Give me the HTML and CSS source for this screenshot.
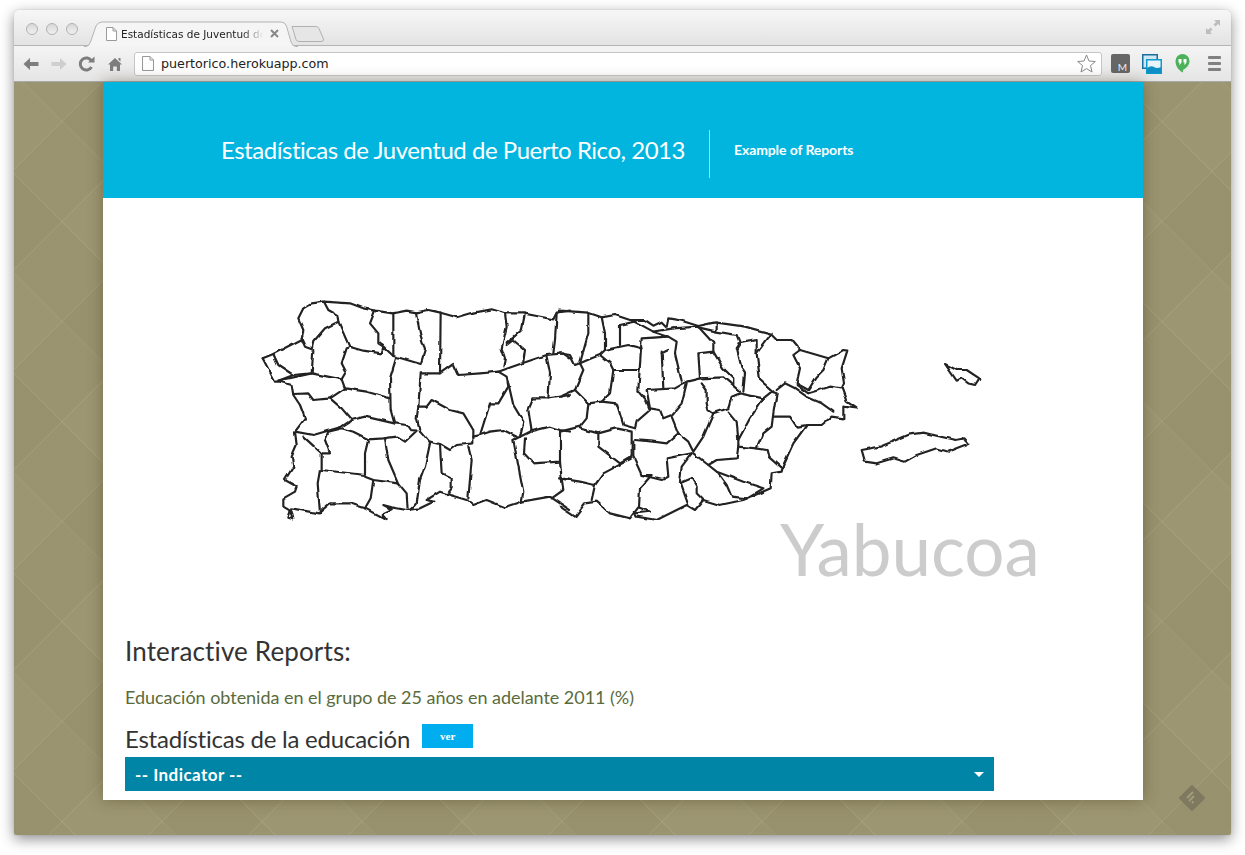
FILE: index.html
```html
<!DOCTYPE html>
<html>
<head>
  <meta charset="utf-8">
  <title>Estadísticas de Juventud de Puerto Rico</title>
  <link rel="stylesheet" href="styles.css">
</head>
<body>
<div class="window">
  <!-- pestañas -->
  <div class="tabstrip">
    <div class="lights"><span></span><span></span><span></span></div>
    <div class="tab">
      <svg class="tab-shape" width="214" height="26" viewBox="0 0 214 26"><path d="M0 25.500 H2 Q5 25.500 6.500 21 L12 5 Q14 1 18 1 H197 Q201 1 202.500 5 L207 21 Q208.500 25.500 212 25.500 H214" fill="#f5f5f5" stroke="#b4b4b4"/></svg>
      <svg class="page-icon" width="11" height="14" viewBox="0 0 11 14"><path d="M.5 .5 H7 L10.500 4 V13.500 H.5 Z M7 .5 V4 H10.500" fill="#fff" stroke="#9a9a9a"/></svg>
      <span class="tab-title">Estadísticas de Juventud de Puerto Rico</span>
      <svg class="tab-x" width="9" height="9" viewBox="0 0 9 9"><path d="M1 1 L8 8 M8 1 L1 8" stroke="#888" stroke-width="2"/></svg>
    </div>
    <svg class="newtab" width="34" height="18" viewBox="0 0 34 18"><path d="M1 1.500 H25 Q27 1.500 28 3.500 L32.500 14 Q33 16.500 30 16.500 H8 Q6 16.500 5 14.500 Z" fill="#e6e6e6" stroke="#b0b0b0"/></svg>
    <svg class="fullscreen" width="16" height="16" viewBox="0 0 16 16"><path d="M9 1 H15 V7 L13 5 L10.500 7.500 L8.500 5.500 L11 3 Z M7 15 H1 V9 L3 11 L5.500 8.500 L7.500 10.500 L5 13 Z" fill="#bdbdbd"/></svg>
  </div>

  <!-- barra de direcciones -->
  <div class="toolbar">
    <svg class="nav" width="18" height="16" viewBox="0 0 18 16"><path d="M1.500 8 L8 2 V6 H16.500 V10 H8 V14 Z" fill="#7d7d7d"/></svg>
    <svg class="nav" width="18" height="16" viewBox="0 0 18 16"><path d="M16.500 8 L10 2 V6 H1.500 V10 H10 V14 Z" fill="#cfcfcf"/></svg>
    <svg class="nav" width="18" height="16" viewBox="0 0 18 16"><path d="M13.500 11 A6 6 0 1 1 13.500 5" fill="none" stroke="#7d7d7d" stroke-width="3"/><path d="M10 6.500 H16.500 V0.500 Z" fill="#7d7d7d"/></svg>
    <svg class="nav" width="18" height="16" viewBox="0 0 18 16"><path d="M9 2 L16 8.500 H14 V15 H10.800 V10.500 H7.200 V15 H4 V8.500 H2 Z M12.500 2 H14.500 V5.500 L12.500 3.700 Z" fill="#7d7d7d"/></svg>
    <div class="omnibox">
      <svg width="12" height="15" viewBox="0 0 12 15"><path d="M.5 .5 H8 L11.500 4 V14.500 H.5 Z M8 .5 V4 H11.500" fill="#fff" stroke="#999"/></svg>
      <span class="url">puertorico.herokuapp.com</span>
      <svg class="star" width="19" height="19" viewBox="0 0 19 19"><path d="M9.500 1 L12 7 L18.300 7.500 L13.500 11.600 L15 18 L9.500 14.600 L4 18 L5.500 11.600 L.7 7.500 L7 7 Z" fill="#fff" stroke="#888"/></svg>
    </div>
    <div class="ext ext-m"><span>M</span></div>
    <svg class="ext-pic" width="20" height="20" viewBox="0 0 20 20"><rect x=".75" y=".75" width="14.500" height="13.500" fill="#cfe6f3" stroke="#1b6f9c" stroke-width="1.500"/><rect x="4.750" y="5.750" width="14.500" height="13.500" fill="#e8f4fa" stroke="#0f9bd0" stroke-width="1.500"/><path d="M5 19 V14 Q9 11 12 13 T19 13 V19 Z" fill="#0f8fc4"/></svg>
    <svg class="ext-hangouts" width="15" height="19" viewBox="0 0 15 19"><path d="M7.500 0 A7 7 0 0 1 14.500 7 C14.500 11 11 14.500 8 16 V18.500 C3.500 16.500 .5 12 .5 7 A7 7 0 0 1 7.500 0 Z" fill="#4cb15a"/><path d="M3.500 5 H6.500 V8.500 L5 10.500 H4 L4.800 8.500 H3.500 Z M8.500 5 H11.500 V8.500 L10 10.500 H9 L9.800 8.500 H8.500 Z" fill="#fff"/></svg>
    <div class="menu"><span></span><span></span><span></span></div>
  </div>

  <!-- contenido de la pagina -->
  <div class="viewport">
    <div class="sheet">
      <header class="banner">
        <h1 class="brand">Estadísticas de Juventud de Puerto Rico, 2013</h1>
        <span class="banner-divider"></span>
        <a class="banner-link">Example of Reports</a>
      </header>

      <div class="map-wrap">
        <svg class="map" width="740" height="240" viewBox="0 0 2220 720">
          <defs>
            <filter id="rough" x="-2%" y="-2%" width="104%" height="104%" color-interpolation-filters="sRGB">
              <feTurbulence type="fractalNoise" baseFrequency="0.035" numOctaves="1" seed="4"/>
              <feDisplacementMap in="SourceGraphic" scale="11" xChannelSelector="R" yChannelSelector="G"/>
              <feGaussianBlur stdDeviation="1.300"/>
            </filter>
          </defs>
          <g class="lines" filter="url(#rough)">
            <!-- mitad oeste -->
            <g>
              <path d="M38 205 L70 192 L155 148 L160 120 L145 85 L160 55 L185 40 L222 35 L300 40 L340 55 L375 62 L428 70 L470 62 L500 67 L535 60 L572 68 L620 82 L660 70 L725 58 L765 70 L820 70 L860 78 L910 88 L920 68 L960 62"/>
              <path d="M38 205 L75 275 L90 275 L125 285 L130 315 L150 345 L165 385 L135 425 L140 465 L125 500 L130 530 L105 570 L140 590 L135 605 L100 625 L100 650 L125 665 L130 688 L115 683 L125 655 L205 670 L240 640 L300 640 L345 655 L410 690 L395 672 L425 658 L400 645 L425 652 L470 660 L510 655 L550 635 L530 630 L570 605 L600 615 L650 630 L670 645 L710 630 L765 652 L815 635 L900 620 L960 660"/>
              <path d="M222 35 L235 60 L262 75 L265 95 L298 170 L290 175 L275 220 L288 245 L275 268"/>
              <path d="M265 95 L225 115 L190 155 L185 178 L165 170 L155 148"/>
              <path d="M190 180 L185 250 L130 255 L85 272"/>
              <path d="M70 192 L85 225 L130 255"/>
              <path d="M85 272 L130 262 L185 250 L275 268 L285 295 L240 325 L190 330 L175 310 L130 312"/>
              <path d="M285 295 L350 305 L420 325"/>
              <path d="M298 170 L340 182 L395 190 L400 170 L430 198"/>
              <path d="M375 62 L360 100 L385 130 L385 160 L400 170"/>
              <path d="M430 70 L430 198 L512 222 L525 180 L510 130 L498 67"/>
              <path d="M572 68 L570 250 L512 250 L505 350 L500 385 L510 425"/>
              <path d="M438 205 L420 265 L422 360 L433 400"/>
              <path d="M240 325 L275 355 L305 390 L275 410 L190 435 L135 425"/>
              <path d="M305 390 L345 380 L433 400 L470 405 L480 420 L500 422 L465 455 L440 440 L400 445 L355 448 L310 425 L275 415 L235 425 L225 450 L240 490 L215 490 L160 440"/>
              <path d="M355 448 L345 490 L345 555 L215 540 L215 490"/>
              <path d="M210 540 L203 580 L210 670"/>
              <path d="M405 445 L415 510 L445 580 L370 570 L345 560"/>
              <path d="M445 580 L470 610 L473 660"/>
              <path d="M370 570 L362 625 L345 655"/>
              <path d="M510 425 L540 460 L525 530 L510 570 L500 640 L480 660"/>
              <path d="M540 455 L570 462 L600 480 L620 465 L670 460 L670 420 L640 370 L600 360 L545 330 L530 350 L505 350"/>
              <path d="M570 465 L575 550 L605 565 L605 595 L590 615"/>
              <path d="M655 470 L665 510 L655 625"/>
              <path d="M670 440 L690 435 L720 425 L760 420 L800 440"/>
              <path d="M690 435 L720 340 L745 340 L775 290 L770 260 L745 245 L690 250 L625 255 L610 222 L570 250"/>
              <path d="M775 280 L790 345 L820 395 L810 440"/>
              <path d="M745 245 L830 215 L890 195 L940 190 L960 205"/>
              <path d="M765 70 L770 110 L755 175 L765 205 L760 230"/>
              <path d="M825 70 L815 120 L770 160"/>
              <path d="M770 165 L790 150 L825 180 L820 215"/>
              <path d="M920 70 L915 150 L910 190"/>
              <path d="M890 200 L900 250 L895 325 L850 325 L835 360 L845 425"/>
              <path d="M895 325 L960 315"/>
              <path d="M810 440 L840 425 L900 410 L930 420 L960 425"/>
              <path d="M825 445 L822 490 L850 520 L930 515 L930 425"/>
              <path d="M930 515 L935 565 L960 570"/>
              <path d="M935 565 L940 600 L905 625"/>
              <path d="M810 440 L790 450 L820 605 L815 635"/>
            </g>
            <!-- mitad este -->
            <g transform="translate(930 0)">
              <path d="M0 62 L85 68 L125 82 L165 75 L210 90 L255 90 L280 107 L305 95 L320 110 L325 85 L365 92 L415 108 L465 97 L555 110 L630 130 L650 150 L695 150 L720 180 L805 205 L850 180 L862 182 L845 235 L852 280 L845 295 L860 335 L890 355 L850 350 L850 385 L815 380 L785 405 L740 405 L700 460 L670 525 L665 545 L635 550 L632 595 L550 630 L480 645 L430 630 L405 660 L380 645 L290 690 L230 680 L225 670 L270 665 L235 652 L210 685 L150 670 L110 635 L75 640 L45 680 L0 650"/>
              <path d="M85 68 L85 130 L60 220 L70 240 L45 300 L0 320"/>
              <path d="M125 82 L135 130 L135 180 L120 195 L150 220 L160 240 L150 310 L125 335 L85 340 L45 300"/>
              <path d="M60 220 L95 205 L120 195"/>
              <path d="M0 190 L30 195 L45 225 L60 220"/>
              <path d="M135 180 L205 165 L245 175"/>
              <path d="M160 240 L240 240"/>
              <path d="M180 105 L180 165"/>
              <path d="M180 105 L225 95 L280 125 L325 140 L245 145 L235 300"/>
              <path d="M280 125 L340 115"/>
              <path d="M325 140 L350 155 L345 190 L365 275"/>
              <path d="M305 185 L310 295"/>
              <path d="M325 180 L305 190"/>
              <path d="M340 115 L415 110 L460 160 L460 185 L415 190 L420 265 L490 262 L540 305"/>
              <path d="M460 185 L490 235 L520 265 L520 285"/>
              <path d="M415 112 L470 125 L530 135 L540 160 L530 175 L545 235 L555 250 L550 305"/>
              <path d="M470 100 L470 120"/>
              <path d="M535 160 L590 150 L590 190 L600 270 L640 305"/>
              <path d="M590 190 L635 130"/>
              <path d="M420 265 L380 275 L345 295 L260 300 L270 355 L300 360 L310 385 L335 375 L365 340 L380 280"/>
              <path d="M235 305 L260 335 L270 360 L230 395 L225 415 L190 405 L170 340 L125 335"/>
              <path d="M85 340 L80 385 L60 410 L0 425"/>
              <path d="M60 415 L115 430 L170 415 L215 425 L215 500 L180 520 L115 470 L115 430"/>
              <path d="M225 450 L280 455 L320 460 L355 430 L335 380"/>
              <path d="M355 430 L385 455 L400 485 L430 440 L460 370 L505 355 L515 320 L540 310 L610 325"/>
              <path d="M425 280 L440 300 L440 340 L445 360 L460 370"/>
              <path d="M505 365 L530 395 L535 450 L570 385 L610 325 L635 305 L650 310 L640 370 L635 410 L610 430 L590 475"/>
              <path d="M650 300 L675 280 L705 295 L740 320 L785 340 L820 365"/>
              <path d="M640 380 L690 380 L710 410 L740 405"/>
              <path d="M535 450 L535 470 L590 475 L620 480 L625 500 L665 535"/>
              <path d="M535 470 L530 505 L470 510 L445 525 L400 490"/>
              <path d="M220 455 L220 500 L245 555 L305 570 L325 560 L320 505 L395 490"/>
              <path d="M395 490 L365 530 L360 575 L385 645"/>
              <path d="M360 580 L395 565 L410 590 L410 610 L430 630"/>
              <path d="M445 525 L470 545 L550 575 L610 595 L560 625 L515 620 L500 585 L470 545"/>
              <path d="M215 505 L130 550 L105 585 L95 630"/>
              <path d="M245 555 L275 555 L240 595 L237 650"/>
              <path d="M0 565 L60 575 L105 585"/>
              <path d="M720 180 L700 195 L720 235 L710 280 L745 300 L770 260 L790 240 L805 205"/>
              <path d="M710 285 L745 310 L810 290 L845 295"/>
              <!-- Culebra y Vieques -->
              <path d="M1155 222 L1190 240 L1220 240 L1258 265 L1245 285 L1225 280 L1205 265 L1190 272 Z"/>
              <path d="M905 480 L960 470 L1050 433 L1090 428 L1185 450 L1210 445 L1225 462 L1165 485 L1130 475 L1070 495 L1035 515 L1000 505 L950 520 L915 515 Z"/>
            </g>
          </g>
        </svg>
        <div class="place-name">Yabucoa</div>
      </div>

      <section class="reports">
        <h2 class="reports-title">Interactive Reports:</h2>
        <p class="report-caption">Educación obtenida en el grupo de 25 años en adelante 2011 (%)</p>
        <div class="report-row">
          <h3 class="report-name">Estadísticas de la educación</h3>
          <a class="btn-ver">ver</a>
        </div>
        <div class="indicator">
          <span>-- Indicator --</span>
          <i class="caret"></i>
        </div>
      </section>
    </div>
    <!-- boton de feedly -->
    <svg class="feedly" width="26" height="26" viewBox="0 0 26 26"><path d="M13 1 L25 13 L13 25 L1 13 Z" fill="#7f7960" stroke="#7f7960" stroke-width="2" stroke-linejoin="round"/><path d="M8 13 L14 7 M10 16 L15 11 M13 18 L14.500 16.500" stroke="#a39c7c" stroke-width="2"/></svg>
  </div>
</div>
</body>
</html>
```

FILE: styles.css
```css
/* base */
body {
  margin: 0;
  height: 855px;
  box-sizing: border-box;
  padding: 10px 14px 0;
  background-color: #fff;
  overflow: hidden;
  font-family: "Lato", "Noto Sans", sans-serif;
}

/* ventana del navegador */
.window {
  height: 825px;
  display: flex;
  flex-direction: column;
  border-radius: 5px 5px 2px 2px;
  overflow: hidden;
  box-shadow: 0 0 1px #999, 0 4px 14px rgba(0, 0, 0, 0.45);
}

/* pestañas */
.tabstrip {
  height: 36px;
  flex: none;
  box-sizing: border-box;
  display: flex;
  align-items: flex-end;
  background: linear-gradient(#f7f7f7, #e3e3e3);
  border-bottom: 1px solid #b4b4b4;
  position: relative;
}
.lights {
  display: flex;
  gap: 8px;
  align-self: center;
  margin: 2px 0 0 12px;
}
.lights span {
  width: 12px;
  height: 12px;
  box-sizing: border-box;
  border: 1px solid #b2b2b2;
  border-radius: 50%;
  background: linear-gradient(#d8d8d8, #f0f0f0);
}
.tab {
  position: relative;
  width: 214px;
  height: 25px;
  margin: 0 0 -1px 6px;
  display: flex;
  align-items: center;
  font-family: "DejaVu Sans", sans-serif;
  font-size: 10.5px;
  color: #222;
}
.tab-shape {
  position: absolute;
  left: 0;
  top: 0;
}
.page-icon {
  position: relative;
  margin-left: 22px;
}
.tab-title {
  position: relative;
  margin-left: 4px;
  width: 142px;
  white-space: nowrap;
  overflow: hidden;
  -webkit-mask-image: linear-gradient(90deg, #000 85%, transparent);
  mask-image: linear-gradient(90deg, #000 85%, transparent);
}
.tab-x {
  position: relative;
  margin-left: 7px;
}
.newtab {
  margin: 0 0 2px -7px;
}
.fullscreen {
  position: absolute;
  right: 10px;
  top: 9px;
}

/* barra de direcciones */
.toolbar {
  height: 36px;
  flex: none;
  box-sizing: border-box;
  display: flex;
  align-items: center;
  padding-left: 8px;
  background: linear-gradient(#f4f4f4, #e5e5e5);
  border-bottom: 1px solid #a9a9a9;
}
.nav {
  margin-right: 10px;
}
.omnibox {
  width: 968px;
  height: 24px;
  box-sizing: border-box;
  padding: 0 5px 0 7px;
  display: flex;
  align-items: center;
  gap: 7px;
  background: #fff;
  border: 1px solid #c6c6c6;
  border-radius: 3px;
}
.url {
  flex: 1;
  font-family: "DejaVu Sans", sans-serif;
  font-size: 12.7px;
  color: #222;
}
.ext {
  flex: none;
}
.ext-m {
  width: 19px;
  height: 19px;
  margin-left: 9px;
  border-radius: 2px;
  background: #666;
  color: #eee;
  font-size: 10px;
  line-height: 11px;
  display: flex;
  align-items: flex-end;
  justify-content: flex-end;
  padding-right: 3px;
  box-sizing: border-box;
}
.ext-pic {
  margin-left: 12px;
}
.ext-hangouts {
  margin-left: 13px;
}
.menu {
  margin-left: 18px;
  width: 13px;
  display: flex;
  flex-direction: column;
  gap: 3px;
}
.menu span {
  height: 3px;
  border-radius: 1px;
  background: #808080;
}

/* fondo con rombos */
.viewport {
  flex: 1;
  position: relative;
  padding: 0 88px 0 89px;
  background-color: #9d9672;
  background-image:
    repeating-linear-gradient(45deg, transparent 0 42.5px, rgba(255, 255, 255, 0.06) 42.5px 44px, transparent 44px 70.71px),
    repeating-linear-gradient(-45deg, transparent 0 57.5px, rgba(255, 255, 255, 0.06) 57.5px 59px, transparent 59px 70.71px),
    repeating-linear-gradient(45deg, rgba(60, 50, 20, 0.025) 0 43px, transparent 43px 113.71px, rgba(60, 50, 20, 0.025) 113.71px 141.42px),
    repeating-linear-gradient(-45deg, rgba(60, 50, 20, 0.025) 0 58px, transparent 58px 128.71px, rgba(60, 50, 20, 0.025) 128.71px 141.42px);
}
.sheet {
  height: 718px;
  background: #fff;
  box-shadow: 0 0 14px rgba(60, 50, 20, 0.4);
  overflow: hidden;
}

/* cabecera */
.banner {
  height: 116px;
  box-sizing: border-box;
  display: flex;
  align-items: center;
  padding: 18px 0 0 118px;
  background: #02b5df;
  color: #fff;
}
.brand {
  margin: 0;
  font-size: 24px;
  font-weight: 400;
  letter-spacing: -0.47px;
}
.banner-divider {
  width: 1px;
  height: 48px;
  margin: 10px 24px 0;
  background: rgba(255, 255, 255, 0.6);
}
.banner-link {
  font-size: 14px;
  font-weight: 700;
  letter-spacing: -0.1px;
}

/* mapa */
.map-wrap {
  position: relative;
  height: 422px;
  padding: 92px 0 0 147px;
  box-sizing: border-box;
}
.map {
  display: block;
}
.lines path {
  fill: none;
  stroke: #222;
  stroke-width: 6.500;
  stroke-linejoin: round;
  stroke-linecap: round;
}
.place-name {
  position: absolute;
  left: 677px;
  top: 306px;
  font-size: 71px;
  line-height: 90px;
  color: #ccc;
}

/* reportes */
.reports {
  padding: 0 0 0 22px;
}
.reports-title {
  margin: 14px 0 0;
  font-size: 26px;
  line-height: 34px;
  font-weight: 400;
  letter-spacing: 0.15px;
  color: #333;
}
.report-caption {
  margin: 17px 0 0;
  font-size: 18px;
  line-height: 24px;
  letter-spacing: -0.03px;
  color: #5a6b3c;
}
.report-row {
  display: flex;
  align-items: flex-start;
  margin-top: 15px;
}
.report-name {
  margin: 0;
  font-size: 24px;
  line-height: 29px;
  font-weight: 400;
  letter-spacing: -0.23px;
  color: #333;
}
.btn-ver {
  margin-left: 12px;
  width: 51px;
  height: 24px;
  line-height: 24px;
  text-align: center;
  background: #00aeef;
  color: #fff;
  font-family: "Liberation Serif", serif;
  font-size: 11px;
  font-weight: 700;
}
.indicator {
  position: relative;
  width: 869px;
  height: 34px;
  margin-top: 4px;
  box-sizing: border-box;
  padding-left: 10px;
  line-height: 36px;
  background: #0085a6;
  color: #fff;
  font-size: 17px;
  font-weight: 700;
  letter-spacing: 0.45px;
}
.caret {
  position: absolute;
  right: 10px;
  top: 15px;
  border-left: 5px solid transparent;
  border-right: 5px solid transparent;
  border-top: 5px solid #fff;
}

/* feedly */
.feedly {
  position: absolute;
  right: 26px;
  bottom: 24px;
}
```
